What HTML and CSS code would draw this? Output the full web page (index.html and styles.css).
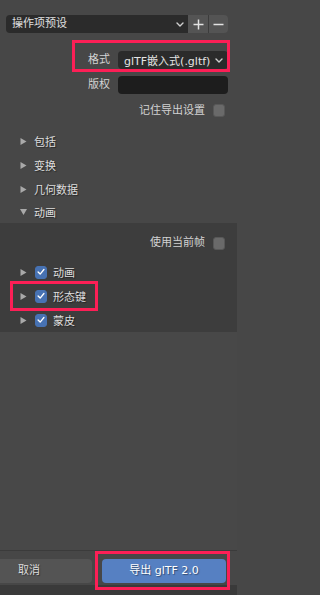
FILE: index.html
```
<!DOCTYPE html>
<html>
<head>
<meta charset="utf-8">
<link rel="stylesheet" href="styles.css">
</head>
<body>
<div class="app">
  <div class="preset-row">
    <div class="preset-select">
      <span>操作项预设</span>
      <svg class="chev" width="8" height="5" viewBox="0 0 8 5"><polyline points="1,1 4,4 7,1"/></svg>
    </div>
    <div class="btn-group">
      <div class="icon-btn"><svg width="11" height="11" viewBox="0 0 11 11"><line x1="5.5" y1="0.5" x2="5.5" y2="10.5"/><line x1="0.5" y1="5.5" x2="10.5" y2="5.5"/></svg></div>
      <div class="icon-btn"><svg width="11" height="11" viewBox="0 0 11 11"><line x1="0.5" y1="5.5" x2="10.5" y2="5.5"/></svg></div>
    </div>
  </div>

  <div class="prop-row first">
    <span class="label">格式</span>
    <div class="field select">
      <span>glTF嵌入式(.gltf)</span>
      <svg class="chev" width="8" height="5" viewBox="0 0 8 5"><polyline points="1,1 4,4 7,1"/></svg>
    </div>
  </div>
  <div class="prop-row">
    <span class="label">版权</span>
    <div class="field text"></div>
  </div>
  <div class="check-row">
    <span class="label">记住导出设置</span>
    <span class="checkbox"></span>
  </div>

  <div class="panels">
    <div class="panel-head"><svg class="tri" width="6" height="7" viewBox="0 0 6 7"><polygon points="0,0 6,3.5 0,7"/></svg><span>包括</span></div>
    <div class="panel-head"><svg class="tri" width="6" height="7" viewBox="0 0 6 7"><polygon points="0,0 6,3.5 0,7"/></svg><span>变换</span></div>
    <div class="panel-head"><svg class="tri" width="6" height="7" viewBox="0 0 6 7"><polygon points="0,0 6,3.5 0,7"/></svg><span>几何数据</span></div>
    <div class="panel-head last"><svg class="tri" width="7" height="6" viewBox="0 0 7 6"><polygon points="0,0 7,0 3.5,6"/></svg><span>动画</span></div>
  </div>

  <div class="subpanel">
    <div class="check-row sub">
      <span class="label">使用当前帧</span>
      <span class="checkbox"></span>
    </div>
    <div class="sub-list">
      <div class="sub-row"><svg class="tri" width="6" height="7" viewBox="0 0 6 7"><polygon points="0,0 6,3.5 0,7"/></svg><span class="checkbox on"><svg width="12" height="12" viewBox="0 0 12 12"><polyline points="2.5,6 5,8.5 9.5,3"/></svg></span><span>动画</span></div>
      <div class="sub-row"><svg class="tri" width="6" height="7" viewBox="0 0 6 7"><polygon points="0,0 6,3.5 0,7"/></svg><span class="checkbox on"><svg width="12" height="12" viewBox="0 0 12 12"><polyline points="2.5,6 5,8.5 9.5,3"/></svg></span><span>形态键</span></div>
      <div class="sub-row"><svg class="tri" width="6" height="7" viewBox="0 0 6 7"><polygon points="0,0 6,3.5 0,7"/></svg><span class="checkbox on"><svg width="12" height="12" viewBox="0 0 12 12"><polyline points="2.5,6 5,8.5 9.5,3"/></svg></span><span>蒙皮</span></div>
    </div>
  </div>

  <div class="filler"></div>

  <div class="footer">
    <div class="btn cancel">取消</div>
    <div class="btn export">导出 glTF 2.0</div>
  </div>
  <div class="bottom"></div>

  <div class="mark mark-format"></div>
  <div class="mark mark-shape"></div>
  <div class="mark mark-export"></div>
</div>
</body>
</html>
```

FILE: styles.css
```
* { box-sizing: border-box; }
html, body {
  margin: 0;
  padding: 0;
  background: #474747;
}
body {
  font-family: "DejaVu Sans", "Noto Sans CJK SC", sans-serif;
  font-size: 11px;
  color: #d6d6d6;
}
.app {
  position: relative;
  width: 237px;
  height: 595px;
  overflow: hidden;
  display: flex;
  flex-direction: column;
  background: #474747;
}
.chev polyline {
  fill: none;
  stroke: #cfcfcf;
  stroke-width: 1.4;
  stroke-linecap: round;
  stroke-linejoin: round;
}
.preset-row {
  margin: 15px 9px 0 6px;
  height: 18px;
  display: flex;
}
.preset-select {
  flex: 1;
  background: #2b2b2b;
  border-radius: 4px 0 0 4px;
  display: flex;
  align-items: center;
  justify-content: space-between;
  padding: 0 4px 0 6px;
  color: #e0e0e0;
  line-height: 18px;
}
.btn-group {
  display: flex;
}
.icon-btn {
  width: 20px;
  height: 18px;
  background: #545454;
  display: flex;
  align-items: center;
  justify-content: center;
}
.icon-btn + .icon-btn {
  border-left: 1px solid #3c3c3c;
  border-radius: 0 4px 4px 0;
}
.icon-btn line {
  stroke: #e2e2e2;
  stroke-width: 1.5;
}
.prop-row {
  display: flex;
  align-items: center;
  height: 18px;
  margin: 7px 9px 0 0;
}
.prop-row.first {
  margin-top: 18px;
}
.label {
  color: #d2d2d2;
  line-height: 18px;
}
.prop-row .label {
  width: 110px;
  text-align: right;
}
.field {
  margin-left: 8px;
  flex: 1;
  height: 18px;
  border-radius: 4px;
}
.field.select {
  background: #2b2b2b;
  display: flex;
  align-items: center;
  justify-content: space-between;
  padding: 0 5px 0 6px;
  color: #e4e4e4;
}
.field.text {
  background: #1d1d1d;
}
.check-row {
  display: flex;
  align-items: center;
  justify-content: flex-end;
  height: 17px;
  margin: 8px 12px 0 0;
}
.check-row .label {
  margin-right: 8px;
}
.checkbox {
  width: 12px;
  height: 13px;
  border-radius: 3px;
  background: #6a6a6a;
  border: 1px solid #585858;
  display: inline-flex;
  align-items: center;
  justify-content: center;
}
.checkbox.on {
  background: #4772b3;
  border-color: #4772b3;
}
.checkbox.on polyline {
  fill: none;
  stroke: #ffffff;
  stroke-width: 1.6;
  stroke-linecap: round;
  stroke-linejoin: round;
}
.panels {
  margin-top: 10px;
}
.panel-head {
  height: 24px;
  display: flex;
  align-items: center;
  padding-left: 20px;
  color: #dedede;
  text-shadow: 1px 1px 1px rgba(0,0,0,0.45);
}
.panel-head.last {
  height: 22px;
}
.tri {
  flex: none;
  width: 7px;
  margin-right: 7px;
}
.tri polygon {
  fill: #a9a9a9;
}
.subpanel {
  background: #3d3d3d;
  height: 109px;
  padding-top: 10px;
}
.check-row.sub {
  margin-top: 0;
  height: 20px;
}
.sub-list {
  margin-top: 7px;
}
.sub-row {
  height: 24px;
  display: flex;
  align-items: center;
  padding-left: 20px;
  color: #dedede;
  text-shadow: 1px 1px 1px rgba(0,0,0,0.45);
}
.sub-row .tri {
  margin-right: 8px;
}
.sub-row .checkbox {
  margin-right: 6px;
}
.filler {
  flex: 1;
  background: #484848;
}
.footer {
  border-top: 1px solid #3b3b3b;
  padding: 8px 11px 2px 0;
  display: flex;
  gap: 10px;
  background: #474747;
}
.btn {
  height: 24px;
  line-height: 24px;
  text-align: center;
  border-radius: 4px;
  text-shadow: 1px 1px 1px rgba(0,0,0,0.4);
}
.btn.cancel {
  width: 126px;
  margin-left: -34px;
  background: #545454;
  color: #dcdcdc;
}
.btn.export {
  width: 124px;
  background: #5680c2;
  color: #ffffff;
}
.bottom {
  height: 10px;
  background: #3a3a3a;
}
.mark {
  position: absolute;
  border: 3px solid #fc1f56;
}
.mark-format {
  left: 72px;
  top: 40px;
  width: 158px;
  height: 32px;
}
.mark-shape {
  left: 10px;
  top: 281px;
  width: 88px;
  height: 30px;
}
.mark-export {
  left: 95px;
  top: 551px;
  width: 135px;
  height: 39px;
}
```
